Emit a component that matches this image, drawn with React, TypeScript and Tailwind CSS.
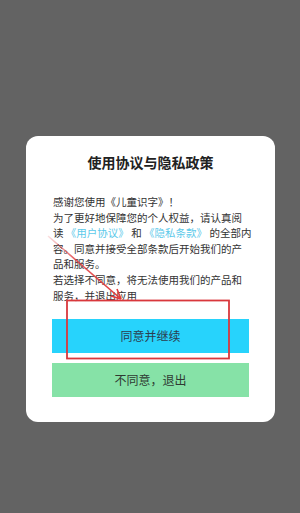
import React from "react";

const font = { fontFamily: '"Noto Sans CJK SC", "Noto Sans", sans-serif' };

function Link({ children }: { children: React.ReactNode }) {
  return <span className="text-[#5cc9ea]">{children}</span>;
}

export default function App() {
  return (
    <div style={font} className="relative w-[300px] h-[513px] bg-[#636363] overflow-hidden pt-[136px] pl-[26px]">
      <div className="w-[249px] bg-white rounded-[12px] px-[26px] pt-[16px] pb-[25px]">
        <h2 className="text-center text-[14px] leading-[20px] font-bold text-[#222]">使用协议与隐私政策</h2>

        {/* Body */}
        <div className="mt-[22px] ml-[1px] text-[10.5px] leading-[15.6px] text-[#333] whitespace-pre">
          <div>感谢您使用《儿童识字》！</div>
          <div>为了更好地保障您的个人权益，请认真阅</div>
          <div>
            读 <Link>《用户协议》</Link> 和 <Link>《隐私条款》</Link> 的全部内
          </div>
          <div>容。同意并接受全部条款后开始我们的产</div>
          <div>品和服务。</div>
          <div>若选择不同意，将无法使用我们的产品和</div>
          <div>服务，并退出应用</div>
        </div>

        <div className="mt-[16px] flex flex-col gap-[10px]">
          <button className="h-[34px] w-full bg-[#27d3fc] text-[12px] text-[#2b3d4f]">同意并继续</button>
          <button className="h-[34px] w-full bg-[#86e2a7] text-[12px] text-[#2f3a33]">不同意，退出</button>
        </div>
      </div>

      {/* red annotation over the dialog */}
      <svg className="absolute left-0 top-0 pointer-events-none" width="300" height="513" viewBox="0 0 300 513">
        <defs>
          <linearGradient id="fade" x1="48" y1="236" x2="121" y2="299" gradientUnits="userSpaceOnUse">
            <stop offset="0" stopColor="#e0393b" stopOpacity="0.15" />
            <stop offset="0.35" stopColor="#e0393b" stopOpacity="0.8" />
            <stop offset="1" stopColor="#e0393b" stopOpacity="1" />
          </linearGradient>
        </defs>
        <line x1="48" y1="236" x2="121" y2="299" stroke="url(#fade)" strokeWidth="1.6" />
        <path d="M121 299 L111 296 M121 299 L117 289" stroke="#e0393b" strokeWidth="1.6" fill="none" />
        <rect x="67" y="300.5" width="162" height="58" fill="none" stroke="#d9383c" strokeWidth="1.8" />
      </svg>
    </div>
  );
}
